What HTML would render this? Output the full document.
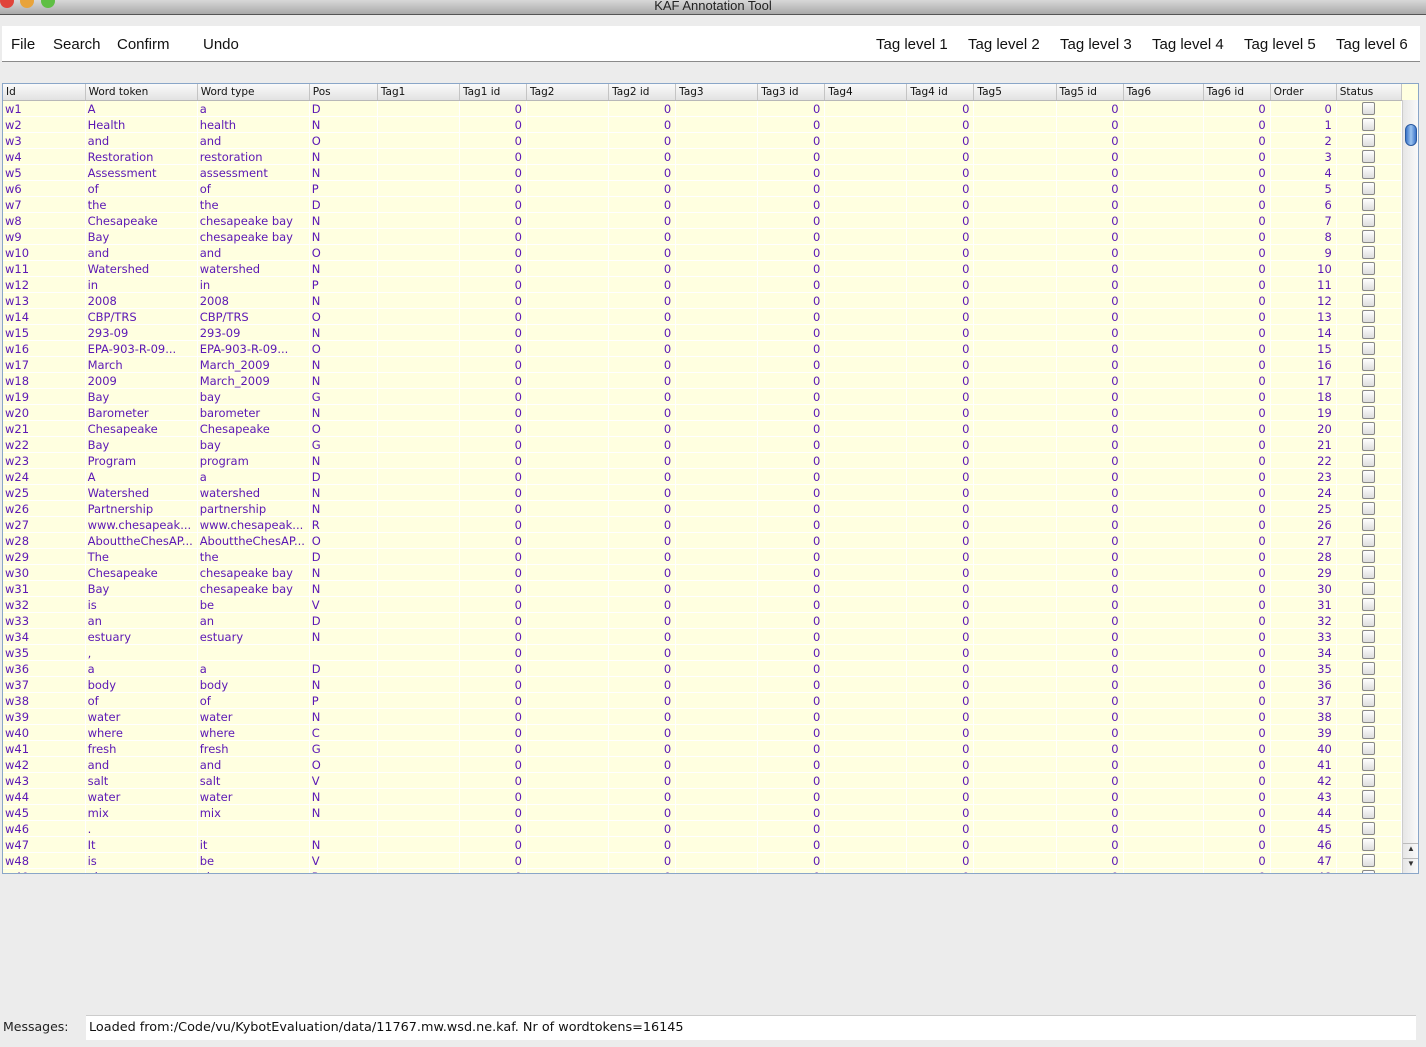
<!DOCTYPE html>
<html><head><meta charset="utf-8"><style>
*{margin:0;padding:0;box-sizing:border-box}
body{width:1426px;height:1047px;background:#ececec;font-family:"Liberation Sans",sans-serif;position:relative;overflow:hidden}
#title{position:absolute;left:0;top:0;width:1426px;height:15px;background:linear-gradient(#d8d8d8,#a9a9a9);border-bottom:1px solid #555;text-align:center;font-size:13px;line-height:11px;color:#222}
.dot{position:absolute;top:-6px;width:14px;height:14px;border-radius:50%}
#menu{position:absolute;left:2px;top:26px;width:1418px;height:36px;background:#fff;border-bottom:1px solid #8a8a8a;font-size:15px;color:#111}
#menu span{position:absolute;top:10px}
#tbl{position:absolute;left:2px;top:83px;width:1417px;height:791px;border:1px solid #8aa6c8;background:#ffffe0;overflow:hidden}
table{border-collapse:collapse;table-layout:fixed;position:absolute;left:0;top:0;width:1399px}
tr{height:16px}
th{height:16px;background:linear-gradient(#fafafa,#e2e2e2);border-right:1px solid #c4c4c4;border-bottom:1px solid #b8b8b8;font-weight:normal;font-family:"DejaVu Sans",sans-serif;font-size:10.5px;line-height:14px;text-align:left;padding-left:3px;color:#111;white-space:nowrap;overflow:hidden}
td{height:16px;border-right:1px solid #fff;border-bottom:1px solid #fff;font-family:"DejaVu Sans",sans-serif;font-size:11.5px;line-height:14px;padding-top:1px;color:#5b17b5;padding-left:2px;padding-right:2px;white-space:nowrap;overflow:hidden}
td:nth-child(6),td:nth-child(8),td:nth-child(10),td:nth-child(12),td:nth-child(14),td:nth-child(16),td:nth-child(17){text-align:right;padding-right:4px}
td:nth-child(18){text-align:center;padding-top:0;line-height:13px}
i{display:inline-block;width:13px;height:13px;border:1px solid #888;border-radius:2px;background:linear-gradient(#fff,#ddd);vertical-align:top}
#sb{position:absolute;left:1399px;top:0;width:16px;height:789px;background:linear-gradient(90deg,#e6e6e6,#fafafa);border-left:1px solid #ccc}
#thumb{position:absolute;left:2px;top:24px;width:12px;height:22px;border-radius:6px;background:linear-gradient(90deg,#3b74c9,#9cc4f0,#3b74c9);border:1px solid #2a5aa0}
#corner{position:absolute;left:1399px;top:0;width:16px;height:16px;background:#ffffe0}
.ar{position:absolute;left:0;width:16px;height:14px;font-size:8px;text-align:center;color:#333;border-top:1px solid #bbb}
#msgl{position:absolute;left:3px;top:1019px;font-family:"DejaVu Sans",sans-serif;font-size:12.5px;color:#222}
#msg{position:absolute;left:86px;top:1015px;width:1330px;height:25px;background:#fff;border-top:1px solid #ccc;font-family:"DejaVu Sans",sans-serif;font-size:12.8px;padding:4px 3px;color:#111}
</style></head><body>
<div id="title"><div class="dot" style="left:0;background:#e0443a"></div><div class="dot" style="left:20px;background:#e8a33a"></div><div class="dot" style="left:41px;background:#5fbf44"></div>KAF Annotation Tool</div>
<div id="menu">
<span style="left:9px">File</span><span style="left:51px">Search</span><span style="left:115px">Confirm</span><span style="left:201px">Undo</span>
<span style="left:874px">Tag level 1</span><span style="left:966px">Tag level 2</span><span style="left:1058px">Tag level 3</span><span style="left:1150px">Tag level 4</span><span style="left:1242px">Tag level 5</span><span style="left:1334px">Tag level 6</span>
</div>
<div id="tbl">
<table>
<colgroup><col style="width:82px"><col style="width:112px"><col style="width:112px"><col style="width:68px"><col style="width:82px"><col style="width:67px"><col style="width:82px"><col style="width:67px"><col style="width:82px"><col style="width:67px"><col style="width:82px"><col style="width:67px"><col style="width:82px"><col style="width:67px"><col style="width:80px"><col style="width:67px"><col style="width:66px"><col style="width:65px"></colgroup>
<tr><th>Id<th>Word token<th>Word type<th>Pos<th>Tag1<th>Tag1 id<th>Tag2<th>Tag2 id<th>Tag3<th>Tag3 id<th>Tag4<th>Tag4 id<th>Tag5<th>Tag5 id<th>Tag6<th>Tag6 id<th>Order<th>Status</tr>
<tr><td>w1<td>A<td>a<td>D<td><td>0<td><td>0<td><td>0<td><td>0<td><td>0<td><td>0<td>0<td><i></i></tr>
<tr><td>w2<td>Health<td>health<td>N<td><td>0<td><td>0<td><td>0<td><td>0<td><td>0<td><td>0<td>1<td><i></i></tr>
<tr><td>w3<td>and<td>and<td>O<td><td>0<td><td>0<td><td>0<td><td>0<td><td>0<td><td>0<td>2<td><i></i></tr>
<tr><td>w4<td>Restoration<td>restoration<td>N<td><td>0<td><td>0<td><td>0<td><td>0<td><td>0<td><td>0<td>3<td><i></i></tr>
<tr><td>w5<td>Assessment<td>assessment<td>N<td><td>0<td><td>0<td><td>0<td><td>0<td><td>0<td><td>0<td>4<td><i></i></tr>
<tr><td>w6<td>of<td>of<td>P<td><td>0<td><td>0<td><td>0<td><td>0<td><td>0<td><td>0<td>5<td><i></i></tr>
<tr><td>w7<td>the<td>the<td>D<td><td>0<td><td>0<td><td>0<td><td>0<td><td>0<td><td>0<td>6<td><i></i></tr>
<tr><td>w8<td>Chesapeake<td>chesapeake bay<td>N<td><td>0<td><td>0<td><td>0<td><td>0<td><td>0<td><td>0<td>7<td><i></i></tr>
<tr><td>w9<td>Bay<td>chesapeake bay<td>N<td><td>0<td><td>0<td><td>0<td><td>0<td><td>0<td><td>0<td>8<td><i></i></tr>
<tr><td>w10<td>and<td>and<td>O<td><td>0<td><td>0<td><td>0<td><td>0<td><td>0<td><td>0<td>9<td><i></i></tr>
<tr><td>w11<td>Watershed<td>watershed<td>N<td><td>0<td><td>0<td><td>0<td><td>0<td><td>0<td><td>0<td>10<td><i></i></tr>
<tr><td>w12<td>in<td>in<td>P<td><td>0<td><td>0<td><td>0<td><td>0<td><td>0<td><td>0<td>11<td><i></i></tr>
<tr><td>w13<td>2008<td>2008<td>N<td><td>0<td><td>0<td><td>0<td><td>0<td><td>0<td><td>0<td>12<td><i></i></tr>
<tr><td>w14<td>CBP/TRS<td>CBP/TRS<td>O<td><td>0<td><td>0<td><td>0<td><td>0<td><td>0<td><td>0<td>13<td><i></i></tr>
<tr><td>w15<td>293-09<td>293-09<td>N<td><td>0<td><td>0<td><td>0<td><td>0<td><td>0<td><td>0<td>14<td><i></i></tr>
<tr><td>w16<td>EPA-903-R-09...<td>EPA-903-R-09...<td>O<td><td>0<td><td>0<td><td>0<td><td>0<td><td>0<td><td>0<td>15<td><i></i></tr>
<tr><td>w17<td>March<td>March_2009<td>N<td><td>0<td><td>0<td><td>0<td><td>0<td><td>0<td><td>0<td>16<td><i></i></tr>
<tr><td>w18<td>2009<td>March_2009<td>N<td><td>0<td><td>0<td><td>0<td><td>0<td><td>0<td><td>0<td>17<td><i></i></tr>
<tr><td>w19<td>Bay<td>bay<td>G<td><td>0<td><td>0<td><td>0<td><td>0<td><td>0<td><td>0<td>18<td><i></i></tr>
<tr><td>w20<td>Barometer<td>barometer<td>N<td><td>0<td><td>0<td><td>0<td><td>0<td><td>0<td><td>0<td>19<td><i></i></tr>
<tr><td>w21<td>Chesapeake<td>Chesapeake<td>O<td><td>0<td><td>0<td><td>0<td><td>0<td><td>0<td><td>0<td>20<td><i></i></tr>
<tr><td>w22<td>Bay<td>bay<td>G<td><td>0<td><td>0<td><td>0<td><td>0<td><td>0<td><td>0<td>21<td><i></i></tr>
<tr><td>w23<td>Program<td>program<td>N<td><td>0<td><td>0<td><td>0<td><td>0<td><td>0<td><td>0<td>22<td><i></i></tr>
<tr><td>w24<td>A<td>a<td>D<td><td>0<td><td>0<td><td>0<td><td>0<td><td>0<td><td>0<td>23<td><i></i></tr>
<tr><td>w25<td>Watershed<td>watershed<td>N<td><td>0<td><td>0<td><td>0<td><td>0<td><td>0<td><td>0<td>24<td><i></i></tr>
<tr><td>w26<td>Partnership<td>partnership<td>N<td><td>0<td><td>0<td><td>0<td><td>0<td><td>0<td><td>0<td>25<td><i></i></tr>
<tr><td>w27<td>www.chesapeak...<td>www.chesapeak...<td>R<td><td>0<td><td>0<td><td>0<td><td>0<td><td>0<td><td>0<td>26<td><i></i></tr>
<tr><td>w28<td>AbouttheChesAP...<td>AbouttheChesAP...<td>O<td><td>0<td><td>0<td><td>0<td><td>0<td><td>0<td><td>0<td>27<td><i></i></tr>
<tr><td>w29<td>The<td>the<td>D<td><td>0<td><td>0<td><td>0<td><td>0<td><td>0<td><td>0<td>28<td><i></i></tr>
<tr><td>w30<td>Chesapeake<td>chesapeake bay<td>N<td><td>0<td><td>0<td><td>0<td><td>0<td><td>0<td><td>0<td>29<td><i></i></tr>
<tr><td>w31<td>Bay<td>chesapeake bay<td>N<td><td>0<td><td>0<td><td>0<td><td>0<td><td>0<td><td>0<td>30<td><i></i></tr>
<tr><td>w32<td>is<td>be<td>V<td><td>0<td><td>0<td><td>0<td><td>0<td><td>0<td><td>0<td>31<td><i></i></tr>
<tr><td>w33<td>an<td>an<td>D<td><td>0<td><td>0<td><td>0<td><td>0<td><td>0<td><td>0<td>32<td><i></i></tr>
<tr><td>w34<td>estuary<td>estuary<td>N<td><td>0<td><td>0<td><td>0<td><td>0<td><td>0<td><td>0<td>33<td><i></i></tr>
<tr><td>w35<td>,<td><td><td><td>0<td><td>0<td><td>0<td><td>0<td><td>0<td><td>0<td>34<td><i></i></tr>
<tr><td>w36<td>a<td>a<td>D<td><td>0<td><td>0<td><td>0<td><td>0<td><td>0<td><td>0<td>35<td><i></i></tr>
<tr><td>w37<td>body<td>body<td>N<td><td>0<td><td>0<td><td>0<td><td>0<td><td>0<td><td>0<td>36<td><i></i></tr>
<tr><td>w38<td>of<td>of<td>P<td><td>0<td><td>0<td><td>0<td><td>0<td><td>0<td><td>0<td>37<td><i></i></tr>
<tr><td>w39<td>water<td>water<td>N<td><td>0<td><td>0<td><td>0<td><td>0<td><td>0<td><td>0<td>38<td><i></i></tr>
<tr><td>w40<td>where<td>where<td>C<td><td>0<td><td>0<td><td>0<td><td>0<td><td>0<td><td>0<td>39<td><i></i></tr>
<tr><td>w41<td>fresh<td>fresh<td>G<td><td>0<td><td>0<td><td>0<td><td>0<td><td>0<td><td>0<td>40<td><i></i></tr>
<tr><td>w42<td>and<td>and<td>O<td><td>0<td><td>0<td><td>0<td><td>0<td><td>0<td><td>0<td>41<td><i></i></tr>
<tr><td>w43<td>salt<td>salt<td>V<td><td>0<td><td>0<td><td>0<td><td>0<td><td>0<td><td>0<td>42<td><i></i></tr>
<tr><td>w44<td>water<td>water<td>N<td><td>0<td><td>0<td><td>0<td><td>0<td><td>0<td><td>0<td>43<td><i></i></tr>
<tr><td>w45<td>mix<td>mix<td>N<td><td>0<td><td>0<td><td>0<td><td>0<td><td>0<td><td>0<td>44<td><i></i></tr>
<tr><td>w46<td>.<td><td><td><td>0<td><td>0<td><td>0<td><td>0<td><td>0<td><td>0<td>45<td><i></i></tr>
<tr><td>w47<td>It<td>it<td>N<td><td>0<td><td>0<td><td>0<td><td>0<td><td>0<td><td>0<td>46<td><i></i></tr>
<tr><td>w48<td>is<td>be<td>V<td><td>0<td><td>0<td><td>0<td><td>0<td><td>0<td><td>0<td>47<td><i></i></tr>
<tr><td>w49<td>also<td>also<td>R<td><td>0<td><td>0<td><td>0<td><td>0<td><td>0<td><td>0<td>48<td><i></i></tr>
</table>
<div id="corner"></div>
<div id="sb" style="top:16px;height:773px"><div id="thumb"></div><div class="ar" style="top:743px">▲</div><div class="ar" style="top:758px">▼</div></div>
</div>
<div id="msgl">Messages:</div>
<div id="msg">Loaded from:/Code/vu/KybotEvaluation/data/11767.mw.wsd.ne.kaf. Nr of wordtokens=16145</div>
</body></html>
